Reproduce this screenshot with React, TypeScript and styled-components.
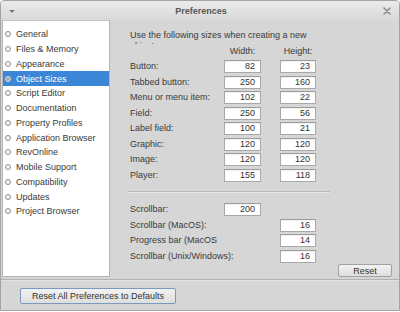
import { FunctionComponent } from "react";
import styled, { createGlobalStyle } from "styled-components";

const GlobalStyle = createGlobalStyle`
  html, body {
    margin: 0;
    padding: 0;
    background: #ffffff;
  }
  body {
    font-family: "Liberation Sans", Arial, sans-serif;
    font-size: 9px;
    color: #3a3a3a;
  }
`;

const sections = [
  "General",
  "Files & Memory",
  "Appearance",
  "Object Sizes",
  "Script Editor",
  "Documentation",
  "Property Profiles",
  "Application Browser",
  "RevOnline",
  "Mobile Support",
  "Compatibility",
  "Updates",
  "Project Browser",
];

const sizes = [
  { label: "Button:", width: 82, height: 23 },
  { label: "Tabbed button:", width: 250, height: 160 },
  { label: "Menu or menu item:", width: 102, height: 22 },
  { label: "Field:", width: 250, height: 56 },
  { label: "Label field:", width: 100, height: 21 },
  { label: "Graphic:", width: 120, height: 120 },
  { label: "Image:", width: 120, height: 120 },
  { label: "Player:", width: 155, height: 118 },
];

const scrollSizes: { label: string; width?: number; height?: number }[] = [
  { label: "Scrollbar:", width: 200 },
  { label: "Scrollbar (MacOS):", height: 16 },
  { label: "Progress bar (MacOS", height: 14 },
  { label: "Scrollbar (Unix/Windows):", height: 16 },
];

const App: FunctionComponent = () => {
  return (
    <>
      <GlobalStyle />
      <Window>
        <TitleBar>
          <MenuArrow />
          <Title>Preferences</Title>
          <CloseButton>
            <svg width="8" height="8" viewBox="0 0 8 8">
              <path
                d="M1 1 L7 7 M7 1 L1 7"
                stroke="#8c8c8c"
                strokeWidth="1.6"
                strokeLinecap="round"
              />
            </svg>
          </CloseButton>
        </TitleBar>
        <Body>
          <SectionList>
            {sections.map((name) => (
              <SectionItem key={name} selected={name === "Object Sizes"}>
                <Bullet selected={name === "Object Sizes"} />
                {name}
              </SectionItem>
            ))}
          </SectionList>
          <Panel>
            <Intro>Use the following sizes when creating a new object:</Intro>
            <SizeGrid>
              <HeadSpacer />
              <ColumnHead>Width:</ColumnHead>
              <ColumnHead>Height:</ColumnHead>
              {sizes.map((row) => (
                <SizeRow key={row.label}>
                  <RowLabel>{row.label}</RowLabel>
                  <NumberField>{row.width}</NumberField>
                  <NumberField>{row.height}</NumberField>
                </SizeRow>
              ))}
            </SizeGrid>
            <Separator />
            <SizeGrid>
              {scrollSizes.map((row) => (
                <SizeRow key={row.label}>
                  <RowLabel>{row.label}</RowLabel>
                  {row.width !== undefined ? (
                    <NumberField>{row.width}</NumberField>
                  ) : (
                    <span />
                  )}
                  {row.height !== undefined ? (
                    <NumberField>{row.height}</NumberField>
                  ) : (
                    <span />
                  )}
                </SizeRow>
              ))}
            </SizeGrid>
            <ResetRow>
              <Button>Reset</Button>
            </ResetRow>
          </Panel>
        </Body>
        <Footer>
          <Button wide>Reset All Preferences to Defaults</Button>
        </Footer>
      </Window>
    </>
  );
};
export default App;

const Window = styled.div`
  width: 400px;
  height: 311px;
  box-sizing: border-box;
  border: 1px solid #a4a4a4;
  border-radius: 4px 4px 0 0;
  background: #d6d6d6;
  display: flex;
  flex-direction: column;
  overflow: hidden;
`;

const TitleBar = styled.div`
  height: 19px;
  flex-shrink: 0;
  display: flex;
  align-items: center;
  justify-content: space-between;
  padding: 0 8px 0 8px;
  background: linear-gradient(#ebebeb, #d9d9d9);
`;

const MenuArrow = styled.div`
  width: 0;
  height: 0;
  border-left: 3px solid transparent;
  border-right: 3px solid transparent;
  border-top: 3px solid #7a7a7a;
  margin-top: 1px;
`;

const Title = styled.div`
  font-weight: bold;
  font-size: 9px;
  color: #575757;
  margin-left: 4px;
`;

const CloseButton = styled.div`
  width: 8px;
  height: 8px;
  display: flex;
`;

const Body = styled.div`
  display: flex;
  height: 259px;
  flex-shrink: 0;
  padding-left: 1px;
`;

const SectionList = styled.div`
  width: 108px;
  height: 257px;
  box-sizing: border-box;
  background: #ffffff;
  border: 1px solid #b4b4b4;
  border-top-color: #c4c4c4;
  padding-top: 6px;
`;

const SectionItem = styled.div<{ selected?: boolean }>`
  height: 14.75px;
  display: flex;
  align-items: center;
  gap: 5px;
  padding-left: 2px;
  color: ${(p) => (p.selected ? "#ffffff" : "#3a3a3a")};
  background: ${(p) => (p.selected ? "#3c86d8" : "transparent")};
  white-space: nowrap;
`;

const Bullet = styled.span<{ selected?: boolean }>`
  width: 4px;
  height: 4px;
  border-radius: 50%;
  border: 1px solid ${(p) => (p.selected ? "#dcdcdc" : "#8e8e8e")};
  background: ${(p) => (p.selected ? "#a8a8a8" : "#f4f4f4")};
  flex-shrink: 0;
`;

const Panel = styled.div`
  display: flex;
  flex-direction: column;
  padding-left: 20px;
  padding-top: 9px;
  flex: 1;
`;

const Intro = styled.div`
  width: 200px;
  height: 15px;
  line-height: 11px;
  padding-top: 1px;
  box-sizing: border-box;
  overflow: hidden;
`;

const SizeGrid = styled.div`
  display: grid;
  grid-template-columns: 75px 37px 36px;
  column-gap: 19px;
  align-items: center;
`;

const HeadSpacer = styled.span`
  height: 15px;
`;

const ColumnHead = styled.div`
  height: 15px;
  line-height: 15px;
  text-align: center;
`;

const SizeRow = styled.div`
  display: contents;
`;

const RowLabel = styled.div`
  height: 15.5px;
  line-height: 15.5px;
  white-space: nowrap;
`;

const NumberField = styled.div`
  height: 13px;
  box-sizing: border-box;
  background: #ffffff;
  border: 1px solid #a9a9a9;
  border-top-color: #9c9c9c;
  box-shadow: inset 0 1px 1px rgba(0, 0, 0, 0.06);
  text-align: right;
  padding-right: 5px;
  line-height: 11px;
  color: #333333;
`;

const Separator = styled.div`
  width: 202px;
  margin: 8px 0 9px -2px;
  height: 1px;
  background: #b9b9b9;
  border-bottom: 1px solid #e6e6e6;
`;

const ResetRow = styled.div`
  display: flex;
  justify-content: flex-end;
  padding-right: 7px;
`;

const Button = styled.div<{ wide?: boolean }>`
  width: ${(p) => (p.wide ? "156px" : "54px")};
  height: ${(p) => (p.wide ? "16px" : "13px")};
  box-sizing: border-box;
  border: 1px solid ${(p) => (p.wide ? "#7b98bd" : "#a2a2a2")};
  border-radius: 2px;
  background: linear-gradient(#f2f2f2, #dedede);
  display: flex;
  align-items: center;
  justify-content: center;
  color: #333333;
  white-space: nowrap;
`;

const Footer = styled.div`
  flex: 1;
  border-top: 1px solid #b2b2b2;
  box-shadow: inset 0 1px 0 #e4e4e4;
  padding: 8px 0 0 19px;
`;
